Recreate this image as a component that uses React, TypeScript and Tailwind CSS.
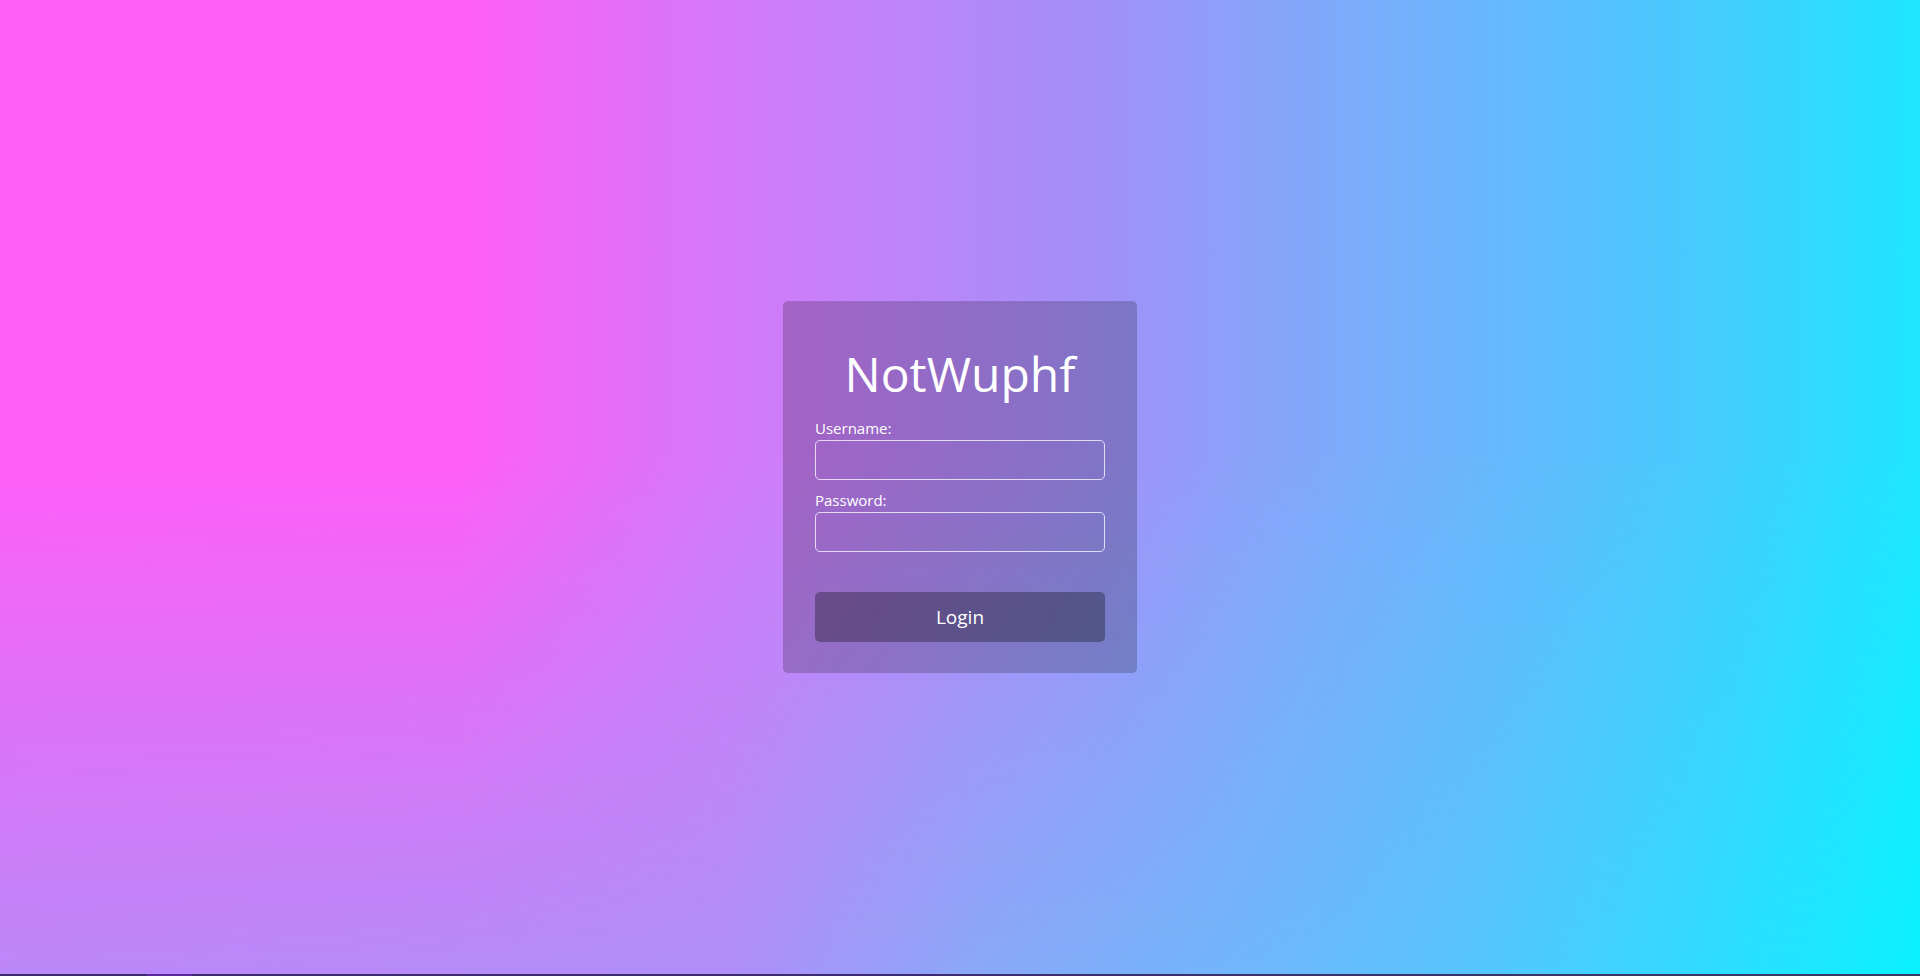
import React from 'react';

const LoginCard = () => {
  return (
    <div className="w-[354px] rounded-[5px] bg-black/20 px-8 pt-8 pb-[31px] text-white">
      <h1 className="mt-[11px] mb-[12px] text-center text-[48px] leading-[60px] font-normal">NotWuphf</h1>
      <form className="flex flex-col" onSubmit={(e) => e.preventDefault()}>
        <label htmlFor="username" className="text-[15px] leading-6">
          Username:
        </label>
        <input
          id="username"
          type="text"
          className="h-10 w-full rounded-[5px] border border-white/75 bg-transparent px-3 text-[15px] text-white outline-none"
        />
        <label htmlFor="password" className="mt-2 text-[15px] leading-6">
          Password:
        </label>
        <input
          id="password"
          type="password"
          className="h-10 w-full rounded-[5px] border border-white/75 bg-transparent px-3 text-[15px] text-white outline-none"
        />
        <button
          type="submit"
          className="mt-10 h-[50px] w-full rounded-[5px] bg-black/30 text-[19px] text-white"
        >
          Login
        </button>
      </form>
    </div>
  );
};

export default function App() {
  return (
    <div className="flex h-screen flex-col font-['Open_Sans',sans-serif]">
      <div className="grid min-h-0 flex-1 grid-cols-1 grid-rows-1">
        {/* bottom colour row */}
        <div className="col-start-1 row-start-1 bg-[linear-gradient(to_right,#bc88f8_0%,#b78bf8_20%,#b08ff8_38%,#8aa8f8_51%,#72b6fb_64%,#56c6fd_77%,#30dcff_89%,#0af2ff_100%)]" />
        {/* top colour row, fading out downwards */}
        <div className="col-start-1 row-start-1 bg-[linear-gradient(to_right,#ff5ef7_0%,#ff5ef7_24%,#d678f8_37%,#bd84f8_47%,#a092f8_58%,#8aa2f9_65%,#66b8fc_78%,#42cefe_90%,#1ee6ff_100%)] [mask-image:linear-gradient(to_bottom,black_47%,transparent_100%)]" />
        <div className="relative z-10 col-start-1 row-start-1 flex items-center justify-center">
          <LoginCard />
        </div>
      </div>
      <div className="flex h-[2px] bg-[linear-gradient(to_right,#3e286e,#3c2b70_50%,#383a62)]">
        <div className="ml-[147px] w-[45px] bg-[#5a2a9c]" />
      </div>
    </div>
  );
}
